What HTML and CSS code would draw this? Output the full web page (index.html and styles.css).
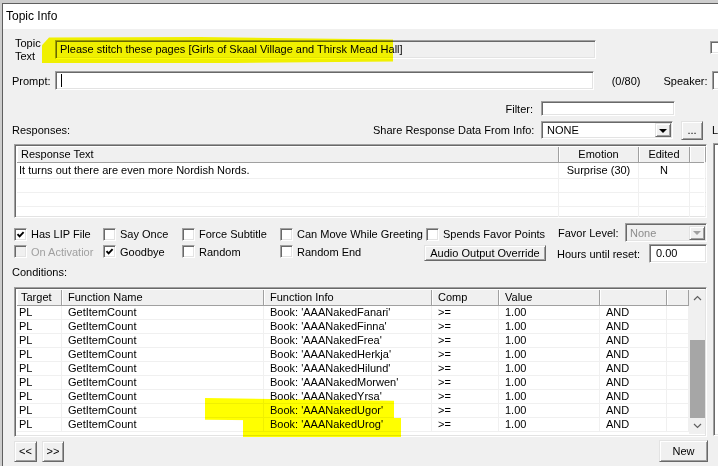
FILE: index.html
```html
<!DOCTYPE html>
<html lang="en">
<head>
    <meta charset="UTF-8">
    <title>Topic Info</title>
    <link rel="stylesheet" href="styles.css">
</head>
<body>
    <div class="window">
        <div class="titlebar">Topic Info</div>

        <div class="dialog">
            <!-- topic text -->
            <div class="row topic-row">
                <div class="topic-label">Topic<br>Text</div>
                <div class="field readonly wide">Please stitch these pages [Girls of Skaal Village and Thirsk Mead Hall]</div>
                <span class="cb edge-cb"></span>
            </div>

            <!-- prompt -->
            <div class="row prompt-row">
                <div class="prompt-label">Prompt:</div>
                <div class="field wide"><span class="caret"></span></div>
                <span class="count">(0/80)</span>
                <span class="speaker">Speaker:</span>
                <div class="field speaker-field"></div>
            </div>

            <div class="row filter-row">
                <span class="filter-label">Filter:</span>
                <div class="field filter-field"></div>
            </div>

            <div class="row share-row">
                <span class="resp-label">Responses:</span>
                <span class="share-label">Share Response Data From Info:</span>
                <div class="field combo"><span class="combo-text">NONE</span><span class="drop"><i class="tri"></i></span></div>
                <button class="btn dots">...</button>
                <span class="cut">L</span>
            </div>

            <div class="main">
                <div class="left">
                    <div class="field list responses">
                        <div class="lrow head">
                            <div class="hc first">Response Text</div>
                            <div class="hc center">Emotion</div>
                            <div class="hc center">Edited</div>
                            <div class="hc"></div>
                        </div>
                        <div class="lrow tall">
                            <div class="c first">It turns out there are even more Nordish Nords.</div>
                            <div class="c center">Surprise (30)</div>
                            <div class="c center">N</div>
                            <div class="c"></div>
                        </div>
                        <div class="lrow"><div class="c"></div><div class="c"></div><div class="c"></div><div class="c"></div></div>
                        <div class="lrow"><div class="c"></div><div class="c"></div><div class="c"></div><div class="c"></div></div>
                        <div class="lrow"><div class="c"></div><div class="c"></div><div class="c"></div><div class="c"></div></div>
                    </div>

                    <div class="checks one">
                        <label class="opt w89"><span class="cb on"><svg viewBox="0 0 9 9"><path d="M1.5 4.2 L3.6 6.4 L7.6 2.1"/></svg></span>Has LIP File</label>
                        <label class="opt w79"><span class="cb"></span>Say Once</label>
                        <label class="opt w98"><span class="cb"></span>Force Subtitle</label>
                        <label class="opt w146"><span class="cb"></span>Can Move While Greeting</label>
                        <label class="opt w132"><span class="cb"></span>Spends Favor Points</label>
                        <span class="favor-label">Favor Level:</span>
                        <div class="field combo off"><span class="combo-text">None</span><span class="drop"><i class="tri"></i></span></div>
                    </div>

                    <div class="checks two">
                        <label class="opt w89 disabled"><span class="cb"></span>On Activatior</label>
                        <label class="opt w79"><span class="cb on"><svg viewBox="0 0 9 9"><path d="M1.5 4.2 L3.6 6.4 L7.6 2.1"/></svg></span>Goodbye</label>
                        <label class="opt w98"><span class="cb"></span>Random</label>
                        <label class="opt w144"><span class="cb"></span>Random End</label>
                        <button class="btn audio">Audio Output Override</button>
                        <span class="hours-label">Hours until reset:</span>
                        <div class="field hours">0.00</div>
                    </div>

                    <div class="cond-label">Conditions:</div>

                    <div class="field list conditions">
                        <div class="grid">
                            <div class="lrow head">
                                <div class="hc">Target</div>
                                <div class="hc">Function Name</div>
                                <div class="hc">Function Info</div>
                                <div class="hc">Comp</div>
                                <div class="hc">Value</div>
                                <div class="hc"></div>
                                <div class="hc"></div>
                            </div>
                            <div id="condRows"></div>
                        </div>
                        <div class="scroll">
                            <div class="arrow"><svg viewBox="0 0 9 6"><path d="M1 5 L4.5 1.5 L8 5"/></svg></div>
                            <div class="track"><div class="thumb"></div></div>
                            <div class="arrow"><svg viewBox="0 0 9 6"><path d="M1 1 L4.5 4.5 L8 1"/></svg></div>
                        </div>
                    </div>
                </div>
                <div class="field side"></div>
            </div>

            <div class="row bottom">
                <button class="btn nav">&lt;&lt;</button>
                <button class="btn nav next">&gt;&gt;</button>
                <button class="btn new">New</button>
            </div>
        </div>
    </div>

    <!-- marker highlights -->
    <div class="mark mark-topic"></div>
    <div class="mark mark-ugor"></div>
    <div class="mark mark-urog"></div>

    <script>
        const books = ['Fanari', 'Finna', 'Frea', 'Herkja', 'Hilund', 'Morwen', 'Yrsa', 'Ugor', 'Urog'];
        const rows = document.getElementById('condRows');
        books.forEach(function (name) {
            const row = document.createElement('div');
            row.className = 'lrow';
            row.innerHTML =
                '<div class="c first">PL</div>' +
                '<div class="c">GetItemCount</div>' +
                "<div class=\"c\">Book: 'AAANaked" + name + "'</div>" +
                '<div class="c">&gt;=</div>' +
                '<div class="c">1.00</div>' +
                '<div class="c">AND</div>' +
                '<div class="c"></div>';
            rows.appendChild(row);
        });
    </script>
</body>
</html>
```

FILE: styles.css
```css
* {
    box-sizing: border-box;
}

html, body {
    margin: 0;
}

body {
    width: 718px;
    height: 466px;
    overflow: hidden;
    position: relative;
    background: #cdcdcd;
    font-family: "Liberation Sans", Arial, sans-serif;
    font-size: 11px;
    color: #000;
}

.window {
    margin: 3px 0 0 2px;
    width: 790px;
    height: 480px;
    border-top: 1px solid #5f5f5f;
    border-left: 1px solid #5f5f5f;
    background: #f0f0f0;
}

.titlebar {
    height: 25px;
    line-height: 24px;
    padding-left: 3px;
    background: #fff;
    font-size: 12px;
}

.dialog {
    padding-left: 9px;
}

.row {
    display: flex;
    align-items: center;
}

/* sunken edit box */
.field {
    border: 1px solid;
    border-color: #a0a0a0 #fff #fff #a0a0a0;
    box-shadow: inset 1px 1px 0 #696969, inset -1px -1px 0 #e3e3e3;
    background: #fff;
}

.field.readonly {
    background: #f0f0f0;
}

/* raised button */
.btn {
    font: inherit;
    color: #000;
    padding: 0;
    background: #f0f0f0;
    border: 1px solid;
    border-color: #e3e3e3 #696969 #696969 #e3e3e3;
    box-shadow: inset 1px 1px 0 #fff, inset -1px -1px 0 #a0a0a0;
}

.cb {
    display: inline-block;
    flex: none;
    width: 13px;
    height: 13px;
    border: 1px solid;
    border-color: #a0a0a0 #fff #fff #a0a0a0;
    box-shadow: inset 1px 1px 0 #696969, inset -1px -1px 0 #e3e3e3;
    background: #fff;
    padding: 1px;
}

.cb svg {
    display: block;
    width: 9px;
    height: 9px;
    fill: none;
    stroke: #000;
    stroke-width: 1.9;
}

/* topic */
.topic-row {
    margin-top: 7px;
    height: 27px;
}

.topic-label {
    width: 40px;
    margin-left: 3px;
    line-height: 13px;
}

.wide {
    width: 541px;
    height: 19px;
    line-height: 16px;
    padding-left: 4px;
    white-space: nowrap;
}

.edge-cb {
    margin-left: 114px;
    margin-top: -4px;
}

/* prompt */
.prompt-row {
    margin-top: 6px;
    height: 23px;
}

.prompt-label {
    width: 43px;
}

.caret {
    display: inline-block;
    width: 1px;
    height: 13px;
    margin-top: 2px;
    margin-left: 1px;
    background: #000;
    vertical-align: top;
}

.count {
    width: 52px;
    margin-left: 18px;
}

.speaker {
    width: 49px;
}

.speaker-field {
    width: 80px;
    height: 19px;
}

/* filter */
.filter-row {
    margin-top: 9px;
    height: 15px;
}

.filter-label {
    width: 521px;
    text-align: right;
}

.filter-field {
    width: 134px;
    height: 15px;
    margin-left: 8px;
}

/* share */
.share-row {
    margin-top: 4px;
    height: 20px;
}

.resp-label {
    width: 361px;
}

.share-label {
    width: 160px;
    text-align: right;
    white-space: nowrap;
}

.combo {
    position: relative;
    display: flex;
    align-items: center;
    width: 132px;
    height: 18px;
    margin-left: 8px;
    padding-left: 5px;
}

.combo-text {
    flex: 1;
}

.drop {
    width: 16px;
    height: 14px;
    margin-right: 1px;
    display: flex;
    align-items: center;
    justify-content: center;
    background: #f0f0f0;
    border: 1px solid;
    border-color: #e3e3e3 #696969 #696969 #e3e3e3;
    box-shadow: inset 1px 1px 0 #fff, inset -1px -1px 0 #a0a0a0;
}

.tri {
    width: 0;
    height: 0;
    border-left: 4px solid transparent;
    border-right: 4px solid transparent;
    border-top: 4px solid #000;
    margin-top: 1px;
}

.dots {
    width: 22px;
    height: 19px;
    margin-left: 8px;
    line-height: 12px;
}

.cut {
    margin-left: 9px;
}

/* main area */
.main {
    display: flex;
    margin-top: 4px;
}

.left {
    margin-left: 2px;
    width: 693px;
}

.side {
    width: 60px;
    height: 293px;
    margin-left: 6px;
    margin-top: -1px;
}

.list {
    overflow: hidden;
    padding: 2px;
}

.responses {
    width: 693px;
    height: 74px;
}

.lrow {
    display: grid;
    height: 14px;
    line-height: 13px;
    border-bottom: 1px solid #f0f0f0;
}

.responses .lrow {
    grid-template-columns: 542px 80px 51px 16px;
}

.responses .lrow.head {
    height: 16px;
    line-height: 15px;
}

.responses .lrow.tall {
    height: 16px;
    line-height: 15px;
}

.lrow .c {
    border-right: 1px solid #f0f0f0;
    padding-left: 6px;
    white-space: nowrap;
    overflow: hidden;
}

.lrow .c.first {
    padding-left: 2px;
}

.lrow.head {
    background: #f0f0f0;
    border-bottom: 1px solid #a0a0a0;
}

.hc {
    padding-left: 6px;
    border-right: 1px solid #a0a0a0;
    box-shadow: inset 1px 0 0 #fff;
    white-space: nowrap;
}

.hc.first,
.conditions .hc:first-child {
    padding-left: 4px;
}

.center,
.lrow .c.center,
.hc.center {
    text-align: center;
    padding-left: 0;
}

/* check rows */
.checks {
    display: flex;
    align-items: center;
    height: 19px;
}

.checks.one {
    margin-top: 5px;
}

.checks.one .opt {
    margin-top: 3px;
}

.checks.two {
    margin-top: 2px;
}

.checks.two .opt {
    margin-top: -4px;
}

.opt {
    display: flex;
    align-items: center;
    gap: 4px;
    white-space: nowrap;
}

.opt.disabled {
    color: #a0a0a0;
}

.opt.disabled .cb {
    background: #f0f0f0;
}

.w89 { width: 89px; }
.w79 { width: 79px; }
.w98 { width: 98px; }
.w146 { width: 146px; }
.w144 { width: 144px; }
.w132 { width: 132px; }

.favor-label {
    width: 67px;
}

.combo.off {
    width: 82px;
    height: 19px;
    margin-left: 0;
    padding-left: 4px;
    background: #f0f0f0;
    color: #8d8d8d;
}

.combo.off .tri {
    border-top-color: #a0a0a0;
}

.audio {
    width: 122px;
    height: 16px;
    line-height: 12px;
    margin-top: -1px;
}

.hours-label {
    width: 92px;
    margin-left: 11px;
}

.hours {
    width: 58px;
    height: 19px;
    line-height: 16px;
    padding-left: 6px;
}

.cond-label {
    margin-top: 3px;
    margin-left: -2px;
    height: 13px;
    line-height: 13px;
}

/* conditions list */
.conditions {
    display: flex;
    margin-top: 8px;
    width: 693px;
    height: 150px;
}

.grid {
    width: 672px;
}

.conditions .lrow {
    grid-template-columns: 45px 202px 168px 67px 101px 67px 22px;
}

.conditions .lrow.head {
    height: 16px;
    line-height: 15px;
}

.scroll {
    width: 17px;
    display: flex;
    flex-direction: column;
    background: #f0f0f0;
}

.arrow {
    height: 17px;
    display: flex;
    align-items: center;
    justify-content: center;
}

.arrow svg {
    width: 9px;
    height: 6px;
    fill: none;
    stroke: #606060;
    stroke-width: 1.2;
}

.track {
    flex: 1;
    padding-top: 33px;
}

.thumb {
    width: 15px;
    height: 78px;
    margin-left: 1px;
    background: #a6a6a6;
}

/* bottom buttons */
.bottom {
    margin-top: 3px;
    margin-left: 2px;
    height: 22px;
}

.nav {
    width: 23px;
    height: 21px;
}

.nav.next {
    margin-left: 5px;
    width: 22px;
}

.new {
    margin-left: 595px;
    width: 49px;
    height: 22px;
}

/* yellow marker strokes */
.mark {
    position: absolute;
    background: #ffff00;
    mix-blend-mode: multiply;
}

.mark-topic {
    left: 42px;
    top: 37px;
    width: 351px;
    height: 26px;
    clip-path: polygon(0 32%, 2% 2%, 45% 0, 100% 10%, 100% 94%, 55% 100%, 0 100%);
}

.mark-ugor {
    left: 205px;
    top: 398px;
    width: 189px;
    height: 23px;
    clip-path: polygon(0 0, 100% 12%, 100% 100%, 0 95%);
}

.mark-urog {
    left: 243px;
    top: 418px;
    width: 158px;
    height: 19px;
}
```
